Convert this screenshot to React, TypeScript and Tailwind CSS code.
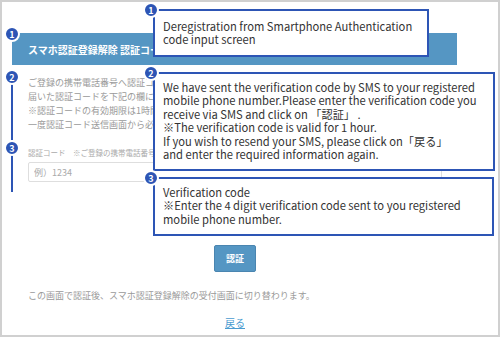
import React from 'react';

const font = "font-['Noto_Sans_CJK_JP','Noto_Sans',sans-serif]";

const Badge: React.FC<{ n: number; className: string }> = ({ n, className }) => (
    <div className={`absolute w-4 h-4 rounded-full bg-[#2d55b5] border-2 border-white text-white text-[9px] font-bold leading-none flex items-center justify-center ${className}`}>
        {n}
    </div>
);

const Callout: React.FC<{ className: string; children: React.ReactNode }> = ({ className, children }) => (
    <div className={`absolute bg-white border-2 border-[#2d55b5] pl-[8px] pr-2 text-[11.2px] leading-[13.4px] text-[#333] ${className}`}>
        {children}
    </div>
);

const App: React.FC = () => {
    return (
        <div className={`relative w-[500px] h-[337px] overflow-hidden bg-white ${font}`}>
            {/* page underneath */}
            <div className="h-full border-2 border-[#d0d0d0]">
                <div className="mt-[31px] ml-[10px] w-[445px] h-[32px] bg-[#5596c3] flex items-center pl-4 text-white text-[10px] font-bold whitespace-nowrap">
                    スマホ認証登録解除 認証コード入力
                </div>
                <div className="ml-[26px] w-[414px] flex flex-col">
                    <div className="mt-[11px] text-[9px] leading-[14px] text-[#9a9a9a] whitespace-nowrap">
                        <p>ご登録の携帯電話番号へ認証コードをSMSで送信しました。</p>
                        <p>届いた認証コードを下記の欄に入力し、「認証」を押してください。</p>
                        <p>※認証コードの有効期限は1時間です。SMSを再送信する場合は「戻る」からもう</p>
                        <p>一度認証コード送信画面から必要事項を入力してください。</p>
                    </div>
                    <div className="mt-[16px] text-[7.5px] leading-[10px] text-[#aaa] whitespace-nowrap">
                        認証コード　※ご登録の携帯電話番号に送信された4桁の認証コードを入力してください。
                    </div>
                    <input
                        type="text"
                        placeholder="例）1234"
                        className="mt-[4px] h-[20px] w-full border border-[#dedede] rounded-[2px] px-[5px] text-[9px] placeholder:text-[#aaa] outline-none"
                    />
                    <button className="mt-[63px] self-center w-[42px] h-[27px] bg-[#5596c3] border border-[#4a85b0] rounded-[2px] text-white text-[9px] font-bold">
                        認証
                    </button>
                    <p className="mt-[17px] text-[9px] leading-[14px] text-[#9a9a9a] whitespace-nowrap">
                        この画面で認証後、スマホ認証登録解除の受付画面に切り替わります。
                    </p>
                    <a href="#" className="mt-[13px] self-center text-[10px] leading-[14px] text-[#4a9bd0] underline">
                        戻る
                    </a>
                </div>
            </div>

            {/* left annotation marks */}
            <div className="absolute left-[11px] top-[83px] w-[2px] h-[57px] bg-[#2d55b5]" />
            <div className="absolute left-[11px] top-[154px] w-[2px] h-[38px] bg-[#2d55b5]" />
            <Badge n={1} className="left-[4px] top-[26px]" />
            <Badge n={2} className="left-[4px] top-[69px]" />
            <Badge n={3} className="left-[4px] top-[140px]" />

            {/* callouts */}
            <Callout className="left-[153px] top-[9px] w-[276px] h-[48px] pt-[9px]">
                <p>Deregistration from Smartphone Authentication</p>
                <p>code input screen</p>
            </Callout>
            <Callout className="left-[153px] top-[72px] w-[342px] h-[99px] pt-[7px]">
                <p>We have sent the verification code by SMS to your registered</p>
                <p>mobile phone number.Please enter the verification code you</p>
                <p>receive via SMS and click on 「認証」 .</p>
                <p>※The verification code is valid for 1 hour.</p>
                <p>If you wish to resend your SMS, please click on「戻る」</p>
                <p>and enter the required information again.</p>
            </Callout>
            <Callout className="left-[153px] top-[177px] w-[341px] h-[59px] pt-[7px]">
                <p>Verification code</p>
                <p>※Enter the 4 digit verification code sent to you registered</p>
                <p>mobile phone number.</p>
            </Callout>
            <Badge n={1} className="left-[143px] top-[2px]" />
            <Badge n={2} className="left-[143px] top-[65px]" />
            <Badge n={3} className="left-[143px] top-[170px]" />
        </div>
    );
};

export default App;
